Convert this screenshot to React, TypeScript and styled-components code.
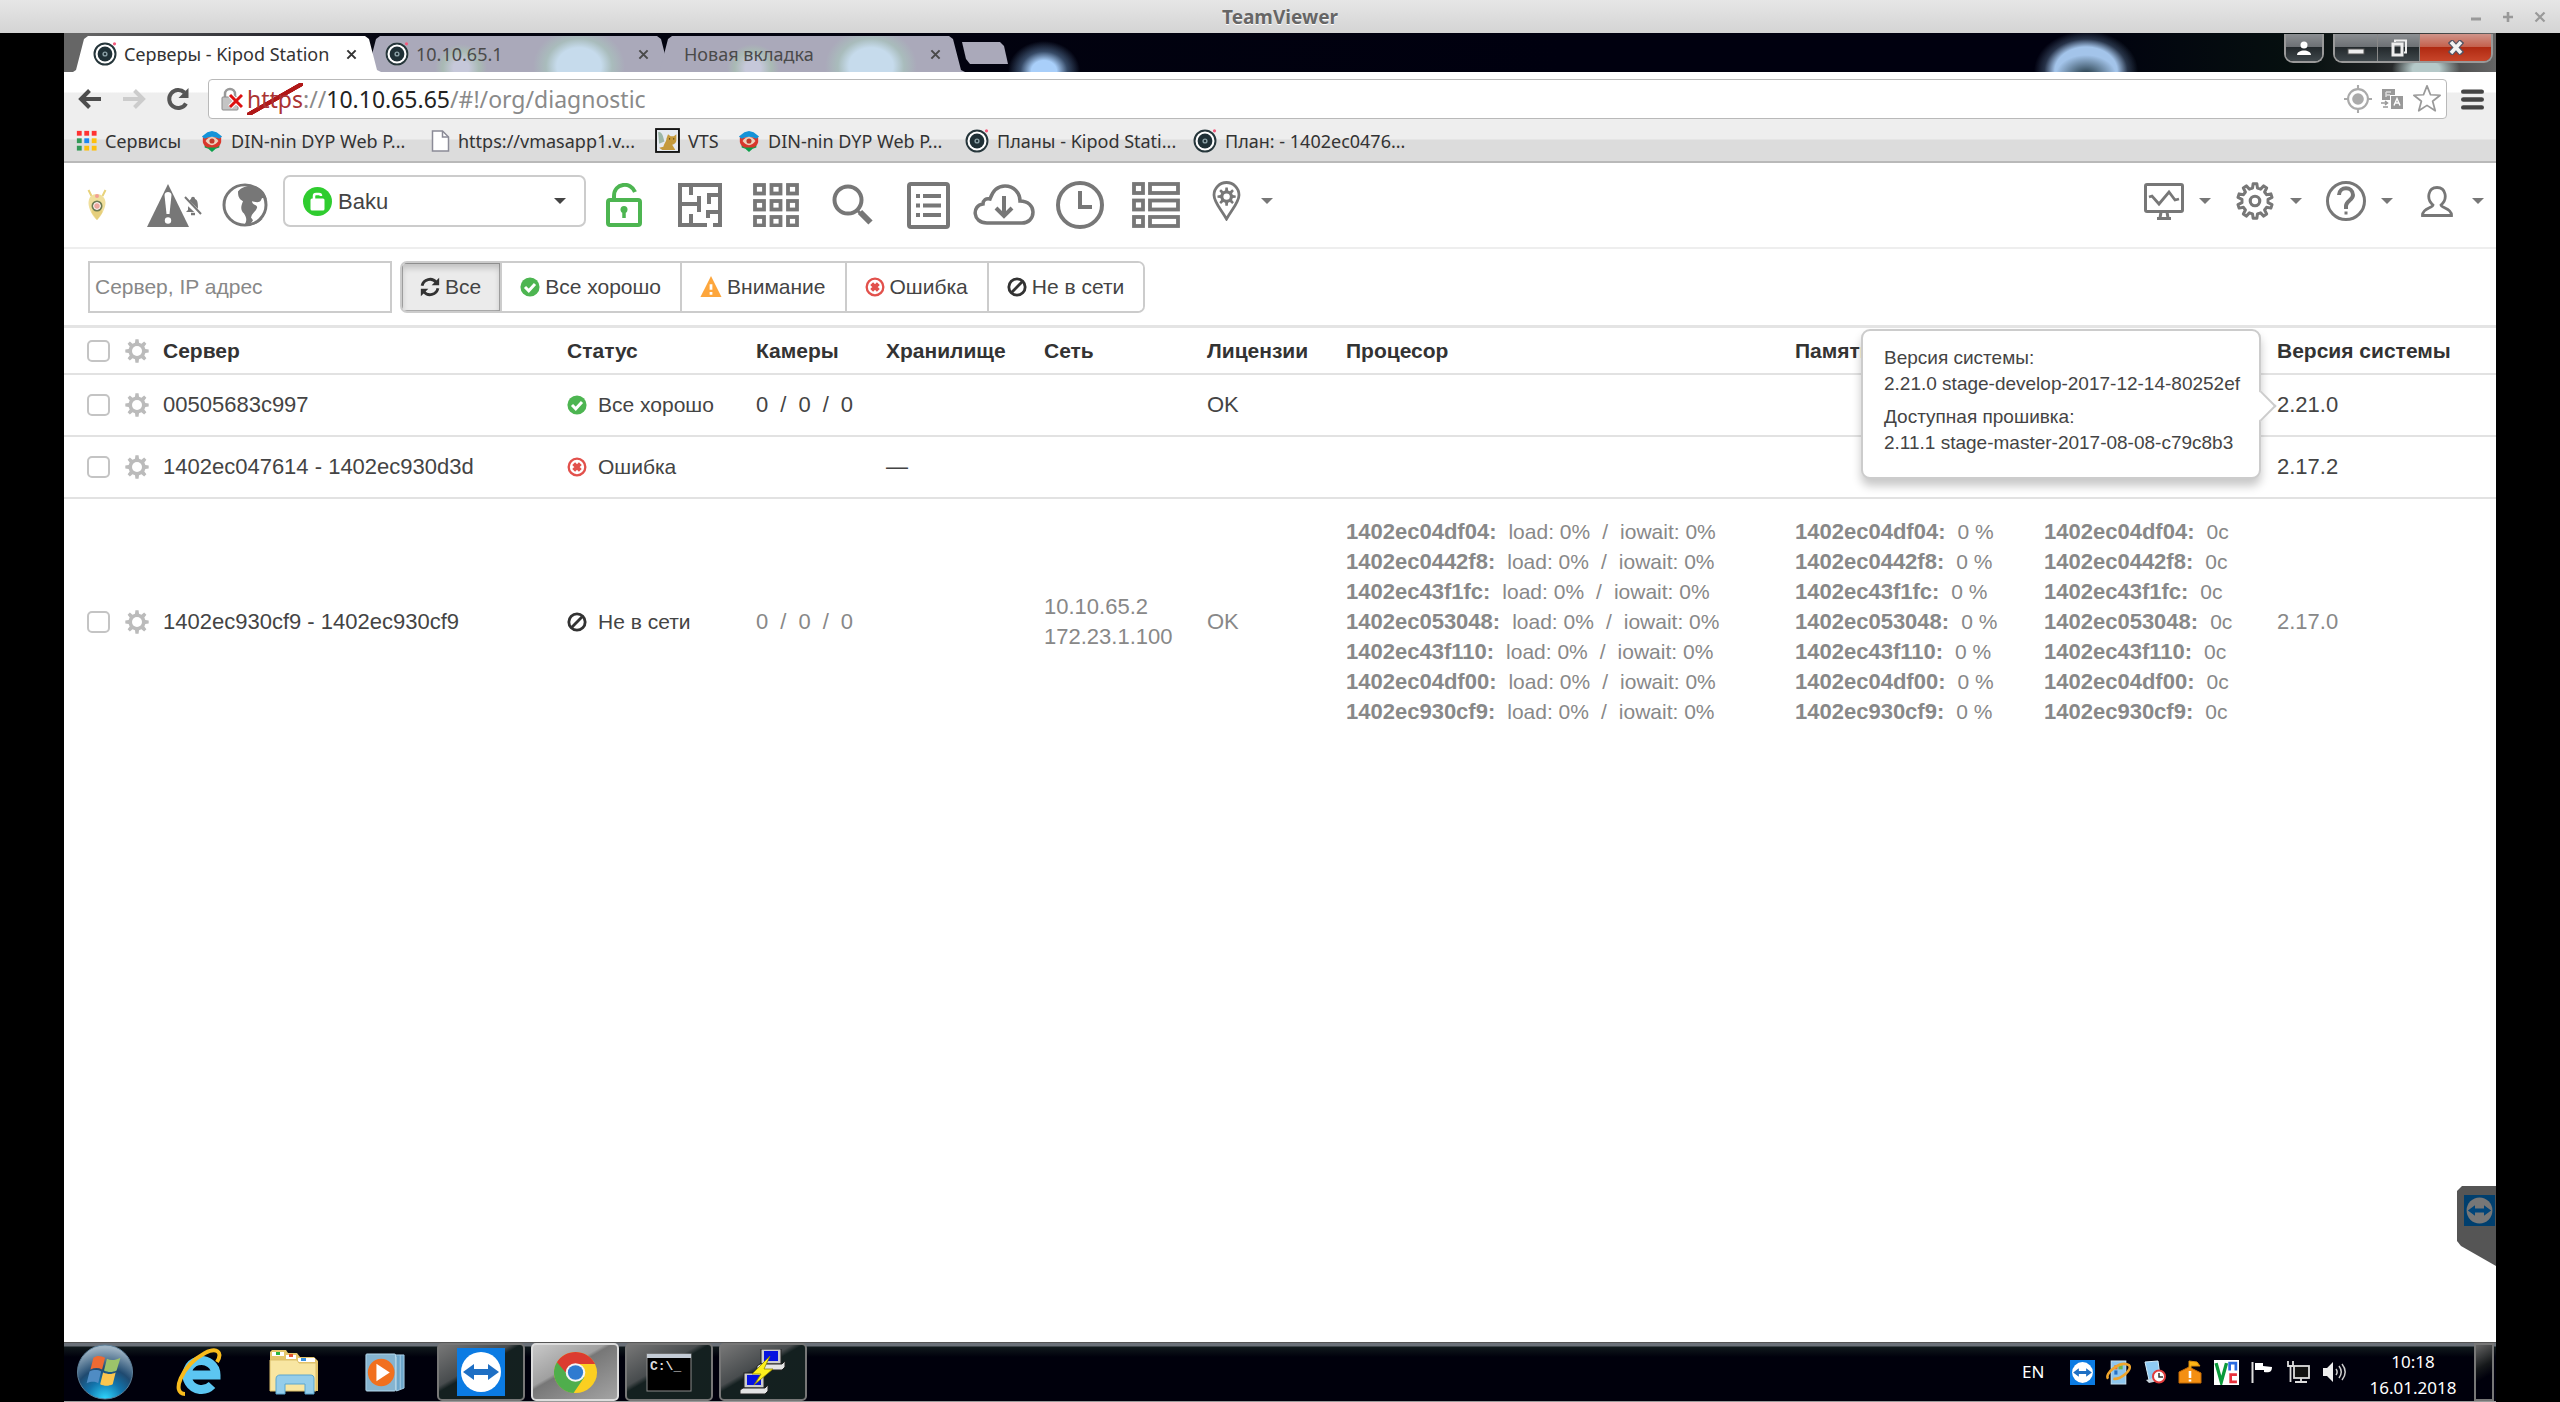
import React from "react";
import styled, { createGlobalStyle, css } from "styled-components";

const uiFont = '"Noto Sans", "Open Sans", sans-serif';
const pageFont = '"Liberation Sans", Arial, sans-serif';

const GlobalStyle = createGlobalStyle`
  *, *::before, *::after { box-sizing: border-box; }
  body { margin: 0; background: #000; font-family: ${pageFont}; }
  button, input, select { font: inherit; color: inherit; margin: 0; padding: 0; border: 0; background: none; }
  svg { display: block; flex: none; }
`;

/* ---------- outer viewer window ---------- */

const Viewer = styled.div`
  display: flex;
  flex-direction: column;
  min-height: 100vh;
`;

const ViewerBar = styled.header`
  display: grid;
  grid-template-columns: 1fr auto 1fr;
  align-items: center;
  height: 33px;
  background: linear-gradient(#e6e6e6, #d4d4d4);
  color: #666;
  font: bold 19px/24px ${uiFont};
  text-shadow: 0 1px 0 #fff;
`;

const ViewerTitle = styled.h1`
  grid-column: 2;
  margin: 0;
  font: inherit;
`;

const ViewerControls = styled.div`
  display: flex;
  justify-content: flex-end;
  padding-right: 4px;
  color: #999;
  button { width: 32px; height: 32px; display: grid; place-items: center; }
`;

const Desktop = styled.div`
  flex: 1;
  display: flex;
  flex-direction: column;
  margin: 0 64px;
  position: relative;
`;

/* ---------- browser chrome ---------- */

const TabStrip = styled.div`
  display: flex;
  align-items: flex-end;
  height: 39px;
  padding-left: 9px;
  background:
    radial-gradient(ellipse 36px 30px at 980px 38px, #a9cffa 35%, rgba(90, 122, 160, 0.6) 65%, transparent 100%),
    radial-gradient(ellipse 30px 20px at 2022px 42px, #2d4452 10%, transparent 100%),
    radial-gradient(ellipse 52px 40px at 2022px 38px, #a3c4ea 60%, rgba(79, 102, 132, 0.5) 80%, transparent 100%),
    radial-gradient(ellipse 34px 20px at calc(100% - 70px) 36px, #b5c9c9 40%, transparent 100%),
    linear-gradient(90deg, #666 0, #666 20px, #03040f 320px, #00000f 1500px, #00000f 82%, #06100f 92%, #1c1f20 95%, #666 100%);
`;

const tabShape = css`
  clip-path: polygon(0 100%, 3px 34px, 11px 3px, 15px 0, calc(100% - 16px) 0, calc(100% - 12px) 3px, calc(100% - 4px) 34px, 100% 100%);
`;

const Tab = styled.div<{ $active?: boolean }>`
  ${tabShape}
  display: flex;
  align-items: center;
  width: 308px;
  height: 36px;
  margin-right: -16px;
  padding: 0 20px;
  position: relative;
  z-index: ${(p) => (p.$active ? 2 : 1)};
  background: ${(p) =>
    p.$active
      ? "#fff"
      : "radial-gradient(ellipse 46px 38px at 214px 30px, #c6dbec 48%, #a9bcbc 72%, transparent 100%), radial-gradient(ellipse 26px 24px at 96px 32px, #c6c8da 30%, #a9bab4 70%, transparent 100%), #aaa9ba"};
  color: ${(p) => (p.$active ? "#333" : "#4a4a4a")};
  font: 18px/24px ${uiFont};
  button { width: 20px; height: 20px; display: grid; place-items: center; }
`;

const TabTitle = styled.span`
  flex: 1;
  margin-left: 7px;
  white-space: nowrap;
  overflow: hidden;
`;

const NewTab = styled.button`
  width: 46px;
  height: 22px;
  margin: 0 0 8px 13px;
  background: #aaa9ba;
  clip-path: polygon(0 0, 38px 0, 42px 4px, 46px 100%, 8px 100%, 4px 17px);
`;

const WindowButtons = styled.div`
  display: flex;
  align-self: flex-start;
  gap: 9px;
  margin-left: auto;
  padding: 1px 3px 0 0;
`;

const GlassGroup = styled.div`
  display: flex;
  border: 2px solid #999;
  border-top: 0;
  border-radius: 0 0 9px 9px;
  overflow: hidden;
`;

const GlassButton = styled.button<{ $kind?: "close" }>`
  display: grid;
  place-items: center;
  width: ${(p) => (p.$kind ? "72px" : "42px")};
  height: 27px;
  background: ${(p) =>
    p.$kind
      ? "linear-gradient(#d0948a 0, #c4604c 48%, #b02a12 50%, #c8452a 100%)"
      : "linear-gradient(#8c8f92 0, #6c7074 48%, #23292c 50%, #3f474b 100%)"};
  & + & { border-left: 1px solid #888; }
`;

const ProfileGroup = styled(GlassGroup)`
  button { width: 36px; }
`;

const Toolbar = styled.div`
  display: flex;
  align-items: center;
  height: 48px;
  padding: 7px 12px 1px 4px;
  background: linear-gradient(#fff 20px, #eee 21px);
`;

const ToolButton = styled.button`
  display: grid;
  place-items: center;
  width: 44px;
  height: 36px;
`;

const AddressBar = styled.div`
  flex: 1;
  display: flex;
  align-items: center;
  height: 40px;
  margin-left: 8px;
  padding: 0 4px 0 12px;
  border: 1px solid #b9b9b9;
  border-radius: 4px;
  background: #fff;
  color: #8a8a8a;
  font: 23px/30px ${uiFont};
`;

const Url = styled.span`
  flex: 1;
  margin-left: 4px;
  strong { font-weight: 400; color: #222; }
`;

const Scheme = styled.s`
  color: #a33;
  text-decoration: none;
  background: linear-gradient(to bottom right, transparent 46%, #b01818 47%, #b01818 54%, transparent 55%);
`;

const AddressActions = styled.div`
  display: flex;
  align-items: center;
  gap: 8px;
`;

const MenuButton = styled(ToolButton)`
  width: 24px;
  margin-left: 13px;
`;

const Bookmarks = styled.nav`
  display: flex;
  align-items: center;
  height: 43px;
  padding-left: 12px;
  border-bottom: 2px solid #b9b9b9;
  background: linear-gradient(#eee 19px, #dcdcdc 20px);
`;

const Bookmark = styled.a<{ $width: number }>`
  display: flex;
  align-items: center;
  gap: 8px;
  width: ${(p) => p.$width}px;
  color: #333;
  font: 18px/24px ${uiFont};
  text-decoration: none;
  white-space: nowrap;
`;

/* ---------- web page ---------- */

const Page = styled.main`
  flex: 1;
  background: #fff;
  color: #444;
`;

const NavBar = styled.nav`
  display: flex;
  align-items: center;
  height: 86px;
  border-bottom: 2px solid #eee;
  color: #777;
`;

const NavButton = styled.button<{ $width?: number; $color?: string }>`
  display: grid;
  place-items: center;
  width: ${(p) => p.$width ?? 76}px;
  height: 52px;
  color: ${(p) => p.$color ?? "inherit"};
`;

const MenuTrigger = styled.button`
  display: flex;
  align-items: center;
  justify-content: space-between;
  width: 91px;
  height: 44px;
  margin-bottom: 8px;
  padding: 0 12px;
`;

const MenuGlyph = styled.span`
  display: grid;
  place-items: center;
  width: 40px;
`;

const Caret = styled.span`
  border: 6px solid transparent;
  border-top-color: currentColor;
  border-bottom-width: 0;
`;

const RightMenus = styled.div`
  display: flex;
  margin-left: auto;
`;

const OrgSelect = styled.label`
  display: flex;
  align-items: center;
  width: 303px;
  height: 52px;
  margin: 0 0 8px 12px;
  padding: 0 18px;
  border: 2px solid #ccc;
  border-radius: 7px;
  color: #444;
  font-size: 22px;
  select {
    flex: 1;
    margin-left: 6px;
    appearance: none;
    outline: 0;
  }
`;

const FilterBar = styled.div`
  display: flex;
  gap: 8px;
  padding: 12px 24px;
  border-bottom: 3px solid #e4e4e4;
`;

const SearchInput = styled.input`
  width: 304px;
  height: 52px;
  padding: 0 5px;
  border: 2px solid #ccc;
  font-size: 21px;
  &::placeholder { color: #888; opacity: 1; }
`;

const FilterGroup = styled.div`
  display: flex;
  border: 2px solid #ccc;
  border-radius: 7px;
  overflow: hidden;
`;

const FilterButton = styled.button<{ $active?: boolean }>`
  display: flex;
  align-items: center;
  gap: 5px;
  padding: 0 19px 0 18px;
  font-size: 21px;
  white-space: nowrap;
  background: ${(p) => (p.$active ? "#ebebeb" : "#fff")};
  box-shadow: ${(p) => (p.$active ? "inset 0 5px 6px rgba(0,0,0,.18), inset 0 0 0 1px #aaa" : "none")};
  & + & { border-left: 2px solid #ccc; }
`;

const ServerTable = styled.table`
  width: 100%;
  table-layout: fixed;
  border-collapse: collapse;
  font-size: 22px;
  line-height: 30px;
  th, td { padding: 0 0 0 12px; text-align: left; white-space: nowrap; }
  th { height: 46px; color: #333; font-size: 21px; }
`;

const Row = styled.tr<{ $offline?: boolean }>`
  border-top: 2px solid #e2e2e2;
  color: ${(p) => (p.$offline ? "#888" : "#444")};
  td { height: 62px; position: relative; }
`;

const SelectCell = styled.div`
  display: flex;
  align-items: center;
  gap: 15px;
  padding-left: 11px;
  color: #bbb;
`;

const Check = styled.input.attrs({ type: "checkbox" })`
  appearance: none;
  width: 23px;
  height: 22px;
  border: 2px solid #c4c4c4;
  border-radius: 5px;
  background: #fff;
`;

const GearButton = styled.button`
  display: grid;
`;

const Dark = styled.span`
  color: #444;
`;

const Status = styled.span`
  display: flex;
  align-items: center;
  gap: 11px;
  color: #444;
  font-size: 21px;
`;

const Spaced = styled.div`
  display: flex;
  gap: 12px;
`;

const NodeValue = styled.span`
  font-size: 21px;
`;

const Nodes = styled.div`
  padding: 18px 0;
`;

const Tooltip = styled.div`
  position: absolute;
  z-index: 3;
  top: -46px;
  right: calc(100% + 4px);
  width: 400px;
  padding: 14px 20px 14px 21px;
  border: 2px solid #ccc;
  border-radius: 9px;
  background: #fff;
  box-shadow: 0 7px 10px rgba(0, 0, 0, 0.22);
  font-size: 19px;
  line-height: 26px;
  &::after {
    content: "";
    position: absolute;
    top: 64px;
    right: -13px;
    width: 22px;
    height: 22px;
    border: 2px solid #ccc;
    border-width: 2px 2px 0 0;
    background: #fff;
    transform: rotate(45deg);
  }
  p { margin: 0 0 7px; }
`;

const SideTab = styled.button`
  position: absolute;
  right: 0;
  bottom: 136px;
  display: flex;
  justify-content: flex-end;
  width: 39px;
  height: 80px;
  padding: 9px 1px 0 0;
  background: #555;
  clip-path: polygon(0 5px, 5px 0, 100% 0, 100% 100%, 4px 60px, 0 55px);
`;

/* ---------- taskbar ---------- */

const Taskbar = styled.footer`
  display: flex;
  align-items: center;
  height: 60px;
  padding-right: 2px;
  border-top: 1px solid #555;
  border-bottom: 1px solid #999;
  background: linear-gradient(#6a7078 0, #6a7078 3px, #10191c 4px, #00000c 14px, #00000c);
`;

const Launch = styled.button<{ $width?: number }>`
  display: grid;
  place-items: center;
  width: ${(p) => p.$width ?? 94}px;
  height: 58px;
`;

const TaskButton = styled.button<{ $current?: boolean }>`
  display: grid;
  place-items: center;
  width: 88px;
  height: 58px;
  margin: 0 3px;
  border: 2px solid ${(p) => (p.$current ? "#ddd" : "#777")};
  border-radius: 5px;
  background: ${(p) =>
    p.$current
      ? "linear-gradient(150deg, #c8c8c8 0, #a0a0a0 40%, #777 44%, #a4a4a4 100%)"
      : "linear-gradient(150deg, #777 0, #484c4e 40%, #142020 46%, #14201f 100%)"};
`;

const Tray = styled.div`
  display: flex;
  align-items: center;
  margin-left: auto;
  color: #fff;
  font: 17px/26px ${uiFont};
`;

const Language = styled.span`
  width: 42px;
`;

const TrayIcon = styled.button`
  display: grid;
  place-items: center;
  width: 36px;
  height: 36px;
`;

const Clock = styled.time`
  width: 122px;
  padding-top: 5px;
  text-align: center;
`;

const ShowDesktop = styled.button`
  width: 20px;
  height: 58px;
  border: 2px solid #777;
  background: linear-gradient(150deg, #666 0, #15181a 40%, #00000c 60%);
`;

/* ---------- drawings ---------- */

function gearPath(teeth: number, outer: number, inner: number, c = 12) {
  const pts: string[] = [];
  const step = (Math.PI * 2) / teeth;
  for (let i = 0; i < teeth; i++) {
    const a = i * step - Math.PI / 2;
    const at = (r: number, t: number) =>
      `${(c + r * Math.cos(a + t * step)).toFixed(2)} ${(c + r * Math.sin(a + t * step)).toFixed(2)}`;
    pts.push(at(inner, -0.3), at(outer, -0.17), at(outer, 0.17), at(inner, 0.3));
  }
  return `M${pts.join("L")}Z`;
}

type IconProps = { w: number; h?: number; box?: string; children: React.ReactNode };
const Icon = ({ w, h = w, box = "0 0 24 24", children }: IconProps) => (
  <svg width={w} height={h} viewBox={box} fill="none" stroke="currentColor" preserveAspectRatio="none" aria-hidden="true">
    {children}
  </svg>
);

const SmallGear = () => (
  <Icon w={24}>
    <path d={gearPath(8, 11.8, 8.6)} fill="currentColor" stroke="none" />
    <circle cx="12" cy="12" r="5" fill="#fff" stroke="none" />
  </Icon>
);

const OkIcon = () => (
  <Icon w={20}>
    <circle cx="12" cy="12" r="11.5" fill="#4db551" stroke="none" />
    <path d="M6 12l4.5 4.5L18 8.5" stroke="#fff" strokeWidth="3.6" />
  </Icon>
);
const WarnIcon = () => (
  <Icon w={22}>
    <path d="M12 0L23.5 23H.5Z" fill="#fda63c" stroke="none" />
    <path d="M12 9v6M12 17.5v3" stroke="#fff" strokeWidth="3" />
  </Icon>
);
const ErrorIcon = () => (
  <Icon w={20}>
    <circle cx="12" cy="12" r="10" stroke="#e2514c" strokeWidth="2.8" />
    <path d="M8 8l8 8M16 8l-8 8" stroke="#e2514c" strokeWidth="4.8" />
  </Icon>
);
const OfflineIcon = () => (
  <Icon w={20}>
    <circle cx="12" cy="12" r="9.8" stroke="#333" strokeWidth="3.4" />
    <path d="M5.5 18.5l13-13" stroke="#333" strokeWidth="3.4" />
  </Icon>
);
const RefreshIcon = () => (
  <Icon w={20}>
    <path d="M2.5 10.5A9.6 9.6 0 0 1 19.5 6.5M21.5 13.5A9.6 9.6 0 0 1 4.5 17.5" stroke="#333" strokeWidth="3.4" />
    <path d="M23 1v9h-9zM1 23v-9h9z" fill="#333" stroke="none" />
  </Icon>
);

const KipodIcon = () => (
  <Icon w={24}>
    <circle cx="12" cy="12" r="11.5" fill="#fff" stroke="none" />
    <circle cx="12" cy="12" r="10.5" stroke="#26363b" strokeWidth="2" />
    <circle cx="12" cy="12" r="7.4" fill="#1f3036" stroke="none" />
    <circle cx="12" cy="12" r="2.6" fill="#8ba0a6" stroke="none" />
    <circle cx="12" cy="12" r="1.200" fill="#1f3036" stroke="none" />
    <circle cx="21.500" cy="1.800" r="1.600" fill="#f45b7c" stroke="none" />
  </Icon>
);
const CloseX = ({ size = 11 }: { size?: number }) => (
  <Icon w={size} box="0 0 12 12">
    <path d="M1.500 1.500l9 9M10.500 1.500l-9 9" strokeWidth="2.200" />
  </Icon>
);
const ShieldIcon = () => (
  <Icon w={22}>
    <path d="M4 14h16v5l-4 1.500-4 3.500-4-3.500L4 19z" fill="#0ba04b" stroke="none" />
    <path d="M2 8h20v5c-1 4-3 5-5 6H7c-2-1-4-2-5-6z" fill="#d9382c" stroke="none" />
    <path d="M1 7L7 2.500 12 1l5 1.500L23 7l-3 2.500c-5-3-11-3-16 0z" fill="#1593d8" stroke="none" />
    <path d="M5 12c4-6 10-6 14 0-4 6-10 6-14 0z" fill="#ecd3bd" stroke="none" />
    <circle cx="12" cy="12" r="2.800" fill="#c23a2a" stroke="none" />
  </Icon>
);
const PageIcon = () => (
  <Icon w={19} h={22} box="0 0 19 22">
    <path d="M1.500 1h10l6 6v14h-16z" fill="#fff" stroke="#8b8b97" strokeWidth="1.500" />
    <path d="M11.500 1v6h6" stroke="#8b8b97" strokeWidth="1.500" />
  </Icon>
);
const CatIcon = () => (
  <Icon w={25}>
    <rect x="1" y="1" width="22" height="22" fill="#e6eaf0" stroke="#111" strokeWidth="1.800" />
    <path d="M3 4c4-1 5 5 6 9l-5 2z" fill="#9db7a8" stroke="none" />
    <path d="M11 10l1.500-4 2.500 2h3l2.500-2v6c0 2-2 4-4 4l3 5H7l-3-2 4-1c1-4 3-5 3-8z" fill="#c59a3c" stroke="none" />
    <path d="M13.500 10.500h1M17.500 10.500h1" stroke="#4a3510" strokeWidth="1.200" />
  </Icon>
);
const AppsIcon = () => (
  <Icon w={21}>
    {["#f33", "#f33", "#f33", "#349a58", "#1c87f0", "#fdbf10", "#349a58", "#fdbf10", "#fdbf10"].map((fill, i) => (
      <rect key={i} x={1 + (i % 3) * 8.5} y={1 + Math.floor(i / 3) * 8.5} width="5.500" height="5.500" fill={fill} stroke="none" />
    ))}
  </Icon>
);
const ArrowIcon = ({ flip, color }: { flip?: boolean; color: string }) => (
  <Icon w={24}>
    <g transform={flip ? "matrix(-1 0 0 1 24 0)" : undefined}>
      <path d="M23 12H4M11.500 3.500L3 12l8.500 8.500" stroke={color} strokeWidth="4" />
    </g>
  </Icon>
);
const ReloadIcon = () => (
  <Icon w={24}>
    <path d="M20 16.500A9 9 0 1 1 18.500 5.500" stroke="#555" strokeWidth="4" />
    <path d="M22.500 1v10h-10z" fill="#555" stroke="none" />
  </Icon>
);
const BrokenLock = () => (
  <Icon w={22} h={24} box="0 0 22 24">
    <path d="M4 11V7a5 5 0 0 1 10 0v4" stroke="#999" strokeWidth="2.500" />
    <rect x="1" y="10" width="16" height="13" rx="1" fill="#c4c4c4" stroke="#8c8c8c" />
    <path d="M9 8l12 12M21 8L9 20" stroke="#fff" strokeWidth="5" />
    <path d="M9 8l12 12M21 8L9 20" stroke="#d11" strokeWidth="3" />
  </Icon>
);
const TargetIcon = () => (
  <Icon w={28}>
    <circle cx="12" cy="12" r="8.500" stroke="#aaa" strokeWidth="1.800" />
    <circle cx="12" cy="12" r="5" fill="#aaa" stroke="none" />
    <path d="M12 0v4M12 20v4M0 12h4M20 12h4" stroke="#aaa" strokeWidth="1.800" />
  </Icon>
);
const TranslateIcon = () => (
  <Icon w={24}>
    <rect x="2" y="2" width="13" height="11" fill="#999" stroke="none" />
    <path d="M6 5h5M6 8h4M6 5v5" stroke="#ddd" strokeWidth="1.400" />
    <rect x="10.500" y="8.500" width="13" height="14" fill="#999" stroke="#fff" />
    <path d="M14 18.500l3-7 3 7M15 16h4" stroke="#fff" strokeWidth="1.400" />
    <path d="M1 16h6M5 14l2.500 2L5 18M8 20H3" stroke="#999" strokeWidth="1.500" />
  </Icon>
);
const StarIcon = () => (
  <Icon w={30}>
    <path d="M12 1.500l2.800 7.100 7.700.4-6 4.800 2.100 7.600L12 17.100l-6.600 4.300 2.100-7.600-6-4.800 7.700-.4z" stroke="#999" strokeWidth="1.400" strokeLinejoin="round" />
  </Icon>
);
const BurgerIcon = () => (
  <Icon w={23} h={21}>
    <path d="M2.500 3h19M2.500 12h19M2.500 21h19" stroke="#444" strokeWidth="5" strokeLinecap="round" />
  </Icon>
);

const BeetleIcon = () => (
  <Icon w={20} h={32} box="0 0 20 32">
    <path d="M1.500 1l3 6M18.500 1l-3 6" stroke="#e8d27a" strokeWidth="2" />
    <path d="M10 5c5 0 8.500 4 8.500 9S14 28 10 31C6 28 1.500 20 1.500 14S5 5 10 5z" fill="#f0df9c" stroke="none" />
    <path d="M10 20c4 0 6 1 5 4l-5 7-5-7c-1-3 1-4 5-4z" fill="#e6cf7c" stroke="none" />
    <circle cx="10" cy="7" r="2" fill="#f2a093" stroke="none" />
    <circle cx="10" cy="17" r="5.500" fill="#6d7a52" stroke="none" />
    <circle cx="10" cy="17" r="3.400" fill="#eea79d" stroke="#fff" />
  </Icon>
);
const AlarmIcon = () => (
  <Icon w={56} h={44} box="0 0 56 44">
    <path d="M22 1L43 44H1Z" fill="currentColor" stroke="none" />
    <path d="M18.500 12c0-4 7-4 7 0l-2 19h-3z" fill="#fff" stroke="none" />
    <circle cx="22" cy="37.500" r="3.200" fill="#fff" stroke="none" />
    <path d="M42 27c0-6 1-10 3-11 0-3 4-3 4 0 3 1 3 5 3 11l2 2H40z" fill="currentColor" stroke="none" />
    <path d="M45 31h4" strokeWidth="2.500" />
    <path d="M38 16l17 16" stroke="#fff" strokeWidth="5" />
    <path d="M39 14l16 17" strokeWidth="2" />
  </Icon>
);
const GlobeIcon = () => (
  <Icon w={46} h={44} box="0 0 46 46">
    <circle cx="23" cy="23" r="21" strokeWidth="3" />
    <path d="M16 9c3-5 12-8 19-5 6 3 9 8 10 14-2-3-5-4-6 0-2 3-5 2-9 1 0 4 6 4 5 7-1 4-5 5-6 10l2 3-2 3 12-5C36 43 30 45 22 44c3-4 3-7 0-12-4-4-3-8-1-13-4-2-5-5-5-10z" fill="currentColor" stroke="none" />
  </Icon>
);
const GreenBadge = () => (
  <Icon w={29} h={29} box="0 0 29 29">
    <circle cx="14.500" cy="14.500" r="14.500" fill="#2fcc2f" stroke="none" />
    <rect x="7.500" y="11.500" width="14" height="12" rx="1.500" fill="#fff" stroke="none" />
    <path d="M11 12.500V9a2 2 0 0 1 2-2h3a2 2 0 0 1 2 2" stroke="#fff" strokeWidth="2.500" />
  </Icon>
);
const LockIcon = () => (
  <Icon w={36} h={44} box="0 0 36 44">
    <rect x="2" y="17" width="32" height="25" rx="2" strokeWidth="4" />
    <path d="M8 17v-4c0-13 17-15 21-4" strokeWidth="4" />
    <circle cx="18" cy="26.500" r="3.500" fill="currentColor" stroke="none" />
    <path d="M18 27v8" strokeWidth="3.500" />
  </Icon>
);
const MazeIcon = () => (
  <Icon w={44} h={44} box="0 0 44 44">
    <path d="M29 42H2V2h40v40h-7M13 2v10M2 21h19M21 13v16M13 42V31M42 12H31v9M42 29H30v6" strokeWidth="4" />
  </Icon>
);
const GridIcon = () => (
  <Icon w={46} h={44} box="0 0 46 44">
    {[0, 1, 2].map((r) => [0, 1, 2].map((c) => <rect key={`${r}${c}`} x={2 + c * 16.5} y={2 + r * 16} width="9" height="8.500" strokeWidth="3.800" />))}
  </Icon>
);
const SearchIcon = () => (
  <Icon w={42} h={42} box="0 0 42 42">
    <circle cx="17" cy="16" r="13.500" strokeWidth="4" />
    <path d="M26 26l3 3" strokeWidth="3" />
    <path d="M29 28l10.500 10.500" strokeWidth="6" />
  </Icon>
);
const ListIcon = () => (
  <Icon w={43} h={47} box="0 0 43 47">
    <rect x="2" y="2" width="39" height="43" rx="2" strokeWidth="4" />
    <path d="M9 14h4M9 23.500h4M9 33h4M16 14h18M16 23.500h18M16 33h18" strokeWidth="4" />
  </Icon>
);
const CloudIcon = () => (
  <Icon w={62} h={42} box="0 0 62 42">
    <path d="M14 39C-1 39-1 21 10 20c0-4 3-6 7-5C20 6 25 2 32 2c9 0 15 7 15 15 8 0 13 5 13 11 0 7-5 11-11 11z" strokeWidth="3.500" />
    <path d="M31 12v19M23 24l8 8 8-8" strokeWidth="4" />
  </Icon>
);
const ClockIcon = () => (
  <Icon w={48} h={48} box="0 0 48 48">
    <circle cx="24" cy="24" r="22" strokeWidth="4" />
    <path d="M24 10v16h12" strokeWidth="4" />
  </Icon>
);
const RowsIcon = () => (
  <Icon w={48} h={46} box="0 0 48 46">
    {[0, 1, 2].map((r) => (
      <React.Fragment key={r}>
        <rect x="2" y={2 + r * 16.5} width="9" height="9" strokeWidth="3.800" />
        <rect x="18" y={2 + r * 16.5} width="28" height="9" strokeWidth="3.800" />
      </React.Fragment>
    ))}
  </Icon>
);
const PinIcon = () => (
  <Icon w={29} h={40} box="0 0 29 40">
    <path d="M14.500 38C8 27 2 21 2 14a12.500 12.500 0 0 1 25 0c0 7-6 13-12.500 24z" strokeWidth="2.800" />
    <g transform="translate(5 6) scale(.8)">
      <path d={gearPath(8, 11.5, 8)} fill="currentColor" stroke="none" />
      <circle cx="12" cy="12" r="4" fill="#fff" stroke="none" />
    </g>
  </Icon>
);
const MonitorIcon = () => (
  <Icon w={40} h={37} box="0 0 40 37">
    <rect x="1.500" y="1.500" width="37" height="27" rx="1.500" strokeWidth="3" />
    <path d="M5 14l3-1 7 8L25 9l6 8 4-1" strokeWidth="2.800" />
    <path d="M17 29l-1 6M23 29l1 6M13 35.500h14" strokeWidth="3" />
  </Icon>
);
const BigGear = () => (
  <Icon w={38} h={38}>
    <path d={gearPath(10, 11, 8.3)} strokeWidth="1.900" strokeLinejoin="round" />
    <circle cx="12" cy="12" r="3" strokeWidth="2" />
  </Icon>
);
const HelpIcon = () => (
  <Icon w={40} h={40} box="0 0 40 40">
    <circle cx="20" cy="20" r="18.500" strokeWidth="3" />
    <path d="M13 14c0-9 14-9 14 0 0 5-7 6-7 11v3" strokeWidth="4" />
    <path d="M20 30.500v3" strokeWidth="3" />
  </Icon>
);
const UserIcon = () => (
  <Icon w={32} h={31} box="0 0 32 31">
    <path d="M12 19c-7-6-5-17.500 4-17.500S27 13 20 19c0 3 11 3 10.500 10.500h-29C1 22 12 22 12 19z" strokeWidth="2.800" />
  </Icon>
);

const TeamViewerLogo = ({ w, h, dim }: { w: number; h: number; dim?: boolean }) => (
  <Icon w={w} h={h} box="0 0 48 48">
    <rect width="48" height="48" fill={dim ? "#003f6e" : "#0b7be3"} stroke="none" />
    <circle cx="24" cy="24" r="20" fill={dim ? "#777" : "#fff"} stroke="none" />
    <path d="M6 24l11-8v5h14v-5l11 8-11 8v-5H17v5z" fill={dim ? "#00457a" : "#1e6fc4"} stroke="none" />
  </Icon>
);
const StartOrb = () => (
  <Icon w={58} h={56} box="0 0 60 57">
    <defs>
      <radialGradient id="orb" cx=".5" cy="1" r=".95">
        <stop offset="0" stopColor="#2fd8ff" />
        <stop offset=".35" stopColor="#1274ac" />
        <stop offset=".6" stopColor="#1f4a70" />
        <stop offset="1" stopColor="#9fb4c4" />
      </radialGradient>
    </defs>
    <ellipse cx="30" cy="28.500" rx="28.500" ry="27.500" fill="url(#orb)" stroke="#5d7f99" />
    <path d="M18 14c4-3 8-2 12 0l-3 12c-4-2-8-2-12 0z" fill="#ee6a33" stroke="none" />
    <path d="M32 15c4 2 8 2 14-1l-4 13c-4 2-9 2-13 0z" fill="#9cc36a" stroke="none" />
    <path d="M14 28c4-2 9-2 12 0l-3 12c-4-2-7-2-12 0z" fill="#4f8cc4" stroke="none" />
    <path d="M28 29c5 2 9 2 13 0l-3 12c-4 2-9 2-13 0z" fill="#fbc64e" stroke="none" />
  </Icon>
);
const ExplorerE = () => (
  <Icon w={48} h={48} box="0 0 48 48">
    <path d="M13 27h28a14.500 14.500 0 1 0-4 10" stroke="#5cc6f2" strokeWidth="9" />
    <path d="M10 46C-4 46 6 18 30 5c12-6 18-1 12 9" stroke="#f8bb1c" strokeWidth="4" />
  </Icon>
);
const FoldersIcon = () => (
  <Icon w={50} h={46} box="0 0 50 46">
    <path d="M1 3l2-2h14l2 3h9l3 4h14l4 4v30H1z" fill="#e5c66c" stroke="none" />
    <path d="M3 3h12v4H3zM17 6h10v4H17zM29 9h17v4H29z" fill="#fff" stroke="none" />
    <path d="M7 3h4v3H7z" fill="#27b53c" stroke="none" />
    <path d="M20 5h4v3h-4z" fill="#e3542e" stroke="none" />
    <path d="M32 9h5v3h-5z" fill="#3a92e0" stroke="none" />
    <path d="M1 11h27l2 3h17v28H1z" fill="#f8e6a2" stroke="#dcbf6a" />
    <path d="M7 45V30c0-3 2-4 4-4h30c3 0 4 1 4 4v15h-9V35H16v10z" fill="#94cdea" stroke="#5ba6cf" />
  </Icon>
);
const PlayerIcon = () => (
  <Icon w={40} h={39} box="0 0 42 40">
    <path d="M8 2h33v34l-8 3V4z" fill="#6ea7cb" stroke="#a9cfe6" />
    <path d="M37 2v35" stroke="#a9cfe6" />
    <rect x="1" y="1" width="31" height="38" rx="1" fill="#86b4d0" stroke="#b7dbee" />
    <circle cx="17" cy="20" r="14" fill="#f1701f" stroke="none" />
    <path d="M12 11l14 9-14 9z" fill="#fff" stroke="none" />
  </Icon>
);
const ChromeIcon = () => (
  <Icon w={45} h={43} box="0 0 46 46">
    <circle cx="23" cy="23" r="22" fill="#fbcf21" stroke="none" />
    <path d="M23 23L4 12a22 22 0 0 0 17 33l11-17z" fill="#4fae4c" stroke="none" />
    <path d="M4 12a22 22 0 0 1 38 0l1 2H23l-10 9z" fill="#dc3b30" stroke="none" />
    <circle cx="23" cy="23" r="10" fill="#f5f5f5" stroke="none" />
    <circle cx="23" cy="23" r="7.800" fill="#2f7bd0" stroke="none" />
  </Icon>
);
const ConsoleIcon = () => (
  <Icon w={46} h={39} box="0 0 46 39">
    <rect x="1" y="1" width="44" height="37" fill="#000" stroke="#8a8a8a" />
    <rect x="1" y="1" width="44" height="4" fill="#c4ccd6" stroke="none" />
    <text x="4" y="17" fontSize="13" fontFamily="Liberation Mono, monospace" fontWeight="700" fill="#ddd" stroke="none">C:\_</text>
  </Icon>
);
const PuttyIcon = () => (
  <Icon w={46} h={46} box="0 0 46 46">
    {[[21, 0], [4, 24]].map(([x, y]) => (
      <g key={x}>
        <rect x={x} y={y} width="20" height="15" fill="#ccc" stroke="#222" />
        <rect x={x + 3} y={y + 2} width="14" height="10" fill="#0713e0" stroke="none" />
        <path d={`M${x - 4} ${y + 21}v-4l3-2h22l3-3v6l-3 3z`} fill="#e4e4e4" stroke="#222" />
      </g>
    ))}
    <path d="M30 7L12 25h9l-7 11 19-16h-9z" fill="#fdf01c" stroke="#8a8200" strokeWidth=".8" />
  </Icon>
);
const UpdateIcon = () => (
  <Icon w={25}>
    <path d="M5 1h14v22H5z" fill="#8ec6ee" stroke="#c8e6f8" />
    <path d="M8 5h3v4H8z" fill="#ea6a30" stroke="none" />
    <path d="M12 5h4v4h-4z" fill="#6ab44a" stroke="none" />
    <path d="M8 10h3v4H8z" fill="#2670c4" stroke="none" />
    <path d="M2 18C-2 13 14 0 22 5c4 4-8 14-15 13" stroke="#f0a52c" strokeWidth="2.500" />
  </Icon>
);
const PcClockIcon = () => (
  <Icon w={24}>
    <path d="M3 2l13-1 2 15-11 4z" fill="#8fcaf2" stroke="#d5eefb" />
    <path d="M4 20l8-2 4 3-9 2z" fill="#c9d5de" stroke="none" />
    <circle cx="17" cy="16.500" r="6" fill="#fff" stroke="#e03c3c" strokeWidth="2" />
    <path d="M17 13v4h4" stroke="#333" strokeWidth="1.500" />
  </Icon>
);
const HomeFlagIcon = () => (
  <Icon w={24}>
    <path d="M1 12l10-5 12 6v10H1z" fill="#f48f12" stroke="#c56a05" />
    <path d="M11 8V1l8 1 3 4h-9v3" fill="#fdb515" stroke="#d98a0c" />
    <path d="M12 11v7M12 19.500v2" stroke="#fff" strokeWidth="2.600" />
  </Icon>
);
const VncIcon = () => (
  <Icon w={25}>
    <rect width="24" height="24" fill="#fff" stroke="none" />
    <path d="M2 3l5 18 5-18" stroke="#0a9a3a" strokeWidth="3.200" />
    <path d="M15 10V3h6v7" stroke="#2a6be0" strokeWidth="2.600" />
    <path d="M22 14h-6v7h6" stroke="#e8303c" strokeWidth="2.600" />
  </Icon>
);
const FlagIcon = () => (
  <Icon w={24}>
    <path d="M2.500 2v21" stroke="#ddd" strokeWidth="2" />
    <path d="M5 3h8v3l9 1c0 5-3 6-8 5V10H5z" fill="#fff" stroke="none" />
  </Icon>
);
const NetIcon = () => (
  <Icon w={24}>
    <rect x="8" y="6" width="15" height="12" fill="#111" stroke="#ddd" strokeWidth="1.800" />
    <path d="M15 18v3M9 22h12M2 1v5h5V1M4.500 6v16" stroke="#ddd" strokeWidth="1.800" />
  </Icon>
);
const VolumeIcon = () => (
  <Icon w={24}>
    <path d="M1 8h4l6-6v20l-6-6H1z" fill="#eee" stroke="none" />
    <path d="M14 9c1.500 2 1.500 4 0 6M17 6c3 4 3 8 0 12M20 4c4 5 4 11 0 16" stroke="#ccc" strokeWidth="1.500" />
  </Icon>
);

/* ---------- data ---------- */

const bookmarks = [
  { label: "Сервисы", width: 125, icon: <AppsIcon /> },
  { label: "DIN-nin DYP Web P...", width: 230, icon: <ShieldIcon /> },
  { label: "https://vmasapp1.v...", width: 224, icon: <PageIcon /> },
  { label: "VTS", width: 83, icon: <CatIcon /> },
  { label: "DIN-nin DYP Web P...", width: 227, icon: <ShieldIcon /> },
  { label: "Планы - Kipod Stati...", width: 228, icon: <KipodIcon /> },
  { label: "План: - 1402ec0476...", width: 210, icon: <KipodIcon /> },
];

const filters = [
  { label: "Все", icon: <RefreshIcon />, active: true },
  { label: "Все хорошо", icon: <OkIcon /> },
  { label: "Внимание", icon: <WarnIcon /> },
  { label: "Ошибка", icon: <ErrorIcon /> },
  { label: "Не в сети", icon: <OfflineIcon /> },
];

const tools = [
  { label: "Планы", icon: <MazeIcon /> },
  { label: "Сетка", icon: <GridIcon /> },
  { label: "Поиск", icon: <SearchIcon /> },
  { label: "Список", icon: <ListIcon /> },
  { label: "Загрузки", icon: <CloudIcon /> },
  { label: "История", icon: <ClockIcon /> },
  { label: "События", icon: <RowsIcon /> },
];

const menus = [
  { label: "Мониторинг", icon: <MonitorIcon /> },
  { label: "Настройки", icon: <BigGear /> },
  { label: "Помощь", icon: <HelpIcon /> },
  { label: "Профиль", icon: <UserIcon /> },
];

const columnWidths = [87, 404, 189, 130, 158, 163, 139, undefined, 249, 233, 231];
const headings = ["Сервер", "Статус", "Камеры", "Хранилище", "Сеть", "Лицензии", "Процесор", "Память", "", "Версия системы"];
const nodes = ["1402ec04df04", "1402ec0442f8", "1402ec43f1fc", "1402ec053048", "1402ec43f110", "1402ec04df00", "1402ec930cf9"];

const Counts = () => (
  <Spaced>
    <span>0</span><span>/</span><span>0</span><span>/</span><span>0</span>
  </Spaced>
);

const NodeList = ({ values }: { values: string[] }) => (
  <Nodes>
    {nodes.map((id) => (
      <Spaced key={id}>
        <b>{id}:</b>
        {values.map((v) => <NodeValue key={v}>{v}</NodeValue>)}
      </Spaced>
    ))}
  </Nodes>
);

const RowControls = ({ name }: { name: string }) => (
  <SelectCell>
    <Check aria-label={`Выбрать ${name}`} />
    <GearButton aria-label={`Настройки ${name}`}><SmallGear /></GearButton>
  </SelectCell>
);

const MenuDropdown = ({ label, icon }: { label: string; icon: React.ReactNode }) => (
  <MenuTrigger aria-label={label}>
    <MenuGlyph>{icon}</MenuGlyph>
    <Caret />
  </MenuTrigger>
);

export default function App() {
  return (
    <Viewer>
      <GlobalStyle />
      <ViewerBar>
        <ViewerTitle>TeamViewer</ViewerTitle>
        <ViewerControls>
          <button aria-label="Minimize"><Icon w={12} box="0 0 12 12"><path d="M1 8h10" strokeWidth="3" /></Icon></button>
          <button aria-label="Maximize"><Icon w={12} box="0 0 12 12"><path d="M1 6h10M6 1v10" strokeWidth="2.600" /></Icon></button>
          <button aria-label="Close"><CloseX size={12} /></button>
        </ViewerControls>
      </ViewerBar>

      <Desktop>
        <TabStrip>
          <Tab $active>
            <KipodIcon />
            <TabTitle>Серверы - Kipod Station</TabTitle>
            <button aria-label="Закрыть вкладку"><CloseX /></button>
          </Tab>
          <Tab>
            <KipodIcon />
            <TabTitle>10.10.65.1</TabTitle>
            <button aria-label="Закрыть вкладку"><CloseX /></button>
          </Tab>
          <Tab>
            <TabTitle>Новая вкладка</TabTitle>
            <button aria-label="Закрыть вкладку"><CloseX /></button>
          </Tab>
          <NewTab aria-label="Новая вкладка" />
          <WindowButtons>
            <ProfileGroup>
              <GlassButton aria-label="Пользователь">
                <Icon w={16} h={14} box="0 0 16 14">
                  <circle cx="8" cy="4" r="3.500" fill="#fff" stroke="none" />
                  <path d="M1 14c0-6 14-6 14 0z" fill="#fff" stroke="none" />
                </Icon>
              </GlassButton>
            </ProfileGroup>
            <GlassGroup>
              <GlassButton aria-label="Свернуть">
                <Icon w={18} h={14} box="0 0 18 14"><rect x="1" y="8" width="16" height="5" fill="#eee" stroke="#555" /></Icon>
              </GlassButton>
              <GlassButton aria-label="Развернуть">
                <Icon w={18} h={18} box="0 0 18 18">
                  <path d="M5 3V1.500h11v12h-2" stroke="#eee" strokeWidth="2" />
                  <rect x="3" y="5" width="9" height="11" stroke="#eee" strokeWidth="3" />
                </Icon>
              </GlassButton>
              <GlassButton $kind="close" aria-label="Закрыть">
                <Icon w={16} h={15} box="0 0 16 15">
                  <path d="M2 1l12 13M14 1L2 14" stroke="#545464" strokeWidth="6" />
                  <path d="M3 2l10 11M13 2L3 13" stroke="#f2f2f2" strokeWidth="3.600" />
                </Icon>
              </GlassButton>
            </GlassGroup>
          </WindowButtons>
        </TabStrip>

        <Toolbar>
          <ToolButton aria-label="Назад"><ArrowIcon color="#4d4d4d" /></ToolButton>
          <ToolButton aria-label="Вперёд"><ArrowIcon flip color="#ccc" /></ToolButton>
          <ToolButton aria-label="Обновить"><ReloadIcon /></ToolButton>
          <AddressBar role="textbox" aria-label="Адрес">
            <BrokenLock />
            <Url><Scheme>https</Scheme>://<strong>10.10.65.65</strong>/#!/org/diagnostic</Url>
            <AddressActions><TargetIcon /><TranslateIcon /><StarIcon /></AddressActions>
          </AddressBar>
          <MenuButton aria-label="Меню"><BurgerIcon /></MenuButton>
        </Toolbar>

        <Bookmarks aria-label="Закладки">
          {bookmarks.map((b, i) => (
            <Bookmark key={i} href="#" $width={b.width}>{b.icon}{b.label}</Bookmark>
          ))}
        </Bookmarks>

        <Page>
          <NavBar aria-label="Навигация">
            <NavButton $width={66} aria-label="Главная"><BeetleIcon /></NavButton>
            <NavButton $width={88} aria-label="Тревоги"><AlarmIcon /></NavButton>
            <NavButton $width={53} aria-label="Карта"><GlobeIcon /></NavButton>
            <OrgSelect>
              <GreenBadge />
              <select aria-label="Организация" defaultValue="Baku"><option>Baku</option></select>
              <Caret />
            </OrgSelect>
            <NavButton $color="#4db551" aria-label="Доступ"><LockIcon /></NavButton>
            {tools.map((t) => <NavButton key={t.label} aria-label={t.label}>{t.icon}</NavButton>)}
            <MenuDropdown label="Места" icon={<PinIcon />} />
            <RightMenus>
              {menus.map((m) => <MenuDropdown key={m.label} label={m.label} icon={m.icon} />)}
            </RightMenus>
          </NavBar>

          <FilterBar>
            <SearchInput placeholder="Сервер, IP адрес" aria-label="Сервер, IP адрес" />
            <FilterGroup>
              {filters.map((f) => (
                <FilterButton key={f.label} $active={f.active}>{f.icon}{f.label}</FilterButton>
              ))}
            </FilterGroup>
          </FilterBar>

          <ServerTable>
            <colgroup>
              {columnWidths.map((w, i) => <col key={i} width={w} />)}
            </colgroup>
            <thead>
              <tr>
                <th><RowControls name="все" /></th>
                {headings.map((h, i) => <th key={i} scope="col">{h}</th>)}
              </tr>
            </thead>
            <tbody>
              <Row>
                <td><RowControls name="00505683c997" /></td>
                <td>00505683c997</td>
                <td><Status><OkIcon />Все хорошо</Status></td>
                <td><Counts /></td>
                <td /><td />
                <td>OK</td>
                <td /><td /><td />
                <td>
                  2.21.0
                  <Tooltip role="tooltip">
                    <p>Версия системы:<br />2.21.0 stage-develop-2017-12-14-80252ef</p>
                    <p>Доступная прошивка:<br />2.11.1 stage-master-2017-08-08-c79c8b3</p>
                  </Tooltip>
                </td>
              </Row>
              <Row>
                <td><RowControls name="1402ec047614" /></td>
                <td>1402ec047614 - 1402ec930d3d</td>
                <td><Status><ErrorIcon />Ошибка</Status></td>
                <td />
                <td>—</td>
                <td /><td /><td /><td /><td />
                <td>2.17.2</td>
              </Row>
              <Row $offline>
                <td><RowControls name="1402ec930cf9" /></td>
                <td><Dark>1402ec930cf9 - 1402ec930cf9</Dark></td>
                <td><Status><OfflineIcon />Не в сети</Status></td>
                <td><Counts /></td>
                <td />
                <td>10.10.65.2<br />172.23.1.100</td>
                <td>OK</td>
                <td><NodeList values={["load: 0%", "/", "iowait: 0%"]} /></td>
                <td><NodeList values={["0 %"]} /></td>
                <td><NodeList values={["0с"]} /></td>
                <td>2.17.0</td>
              </Row>
            </tbody>
          </ServerTable>
        </Page>

        <SideTab aria-label="TeamViewer"><TeamViewerLogo w={31} h={31} dim /></SideTab>

        <Taskbar>
          <Launch $width={82} aria-label="Пуск"><StartOrb /></Launch>
          <Launch $width={106} aria-label="Internet Explorer"><ExplorerE /></Launch>
          <Launch $width={84} aria-label="Проводник"><FoldersIcon /></Launch>
          <Launch $width={98} aria-label="Проигрыватель"><PlayerIcon /></Launch>
          <TaskButton aria-label="TeamViewer"><TeamViewerLogo w={48} h={48} /></TaskButton>
          <TaskButton $current aria-label="Chrome"><ChromeIcon /></TaskButton>
          <TaskButton aria-label="Командная строка"><ConsoleIcon /></TaskButton>
          <TaskButton aria-label="PuTTY"><PuttyIcon /></TaskButton>
          <Tray>
            <Language>EN</Language>
            <TrayIcon aria-label="TeamViewer"><TeamViewerLogo w={25} h={25} /></TrayIcon>
            <TrayIcon aria-label="Обновление"><UpdateIcon /></TrayIcon>
            <TrayIcon aria-label="Компьютер"><PcClockIcon /></TrayIcon>
            <TrayIcon aria-label="Защита"><HomeFlagIcon /></TrayIcon>
            <TrayIcon aria-label="VNC"><VncIcon /></TrayIcon>
            <TrayIcon aria-label="Центр поддержки"><FlagIcon /></TrayIcon>
            <TrayIcon aria-label="Сеть"><NetIcon /></TrayIcon>
            <TrayIcon aria-label="Громкость"><VolumeIcon /></TrayIcon>
            <Clock>10:18<br />16.01.2018</Clock>
            <ShowDesktop aria-label="Показать рабочий стол" />
          </Tray>
        </Taskbar>
      </Desktop>
    </Viewer>
  );
}
